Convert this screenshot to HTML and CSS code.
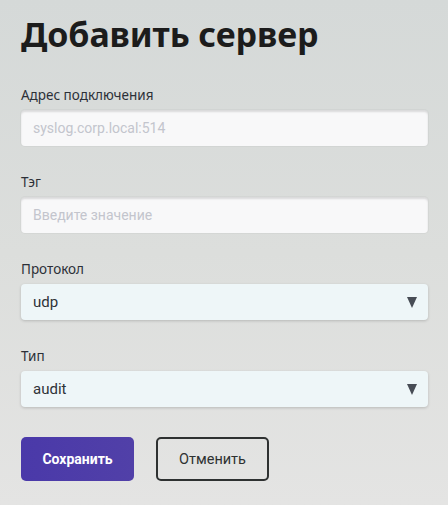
FILE: index.html
```
<!DOCTYPE html>
<html lang="ru">
<head>
<meta charset="utf-8">
<link rel="stylesheet" href="styles.css">
</head>
<body>
<main class="page">
  <h1 class="title">Добавить сервер</h1>
  <form class="form">
    <div class="field">
      <label class="label">Адрес подключения</label>
      <input class="input" type="text" placeholder="syslog.corp.local:514">
    </div>
    <div class="field">
      <label class="label">Тэг</label>
      <input class="input" type="text" placeholder="Введите значение">
    </div>
    <div class="field">
      <label class="label">Протокол</label>
      <div class="select"><span class="select-value">udp</span><span class="caret"></span></div>
    </div>
    <div class="field">
      <label class="label">Тип</label>
      <div class="select"><span class="select-value">audit</span><span class="caret"></span></div>
    </div>
    <div class="actions">
      <button type="button" class="btn btn-primary">Сохранить</button>
      <button type="button" class="btn btn-secondary">Отменить</button>
    </div>
  </form>
</main>
</body>
</html>
```
FILE: styles.css
```
html, body {
  margin: 0;
  padding: 0;
  height: 100%;
}
body {
  background: linear-gradient(180deg, #d5d9d8 0%, #dcdedc 50%, #e4e4e3 100%);
  font-family: "Noto Sans", "Liberation Sans", sans-serif;
  color: #2a2e33;
}
.page {
  padding: 13px 20px 0 21px;
}
.title {
  margin: 0 0 31px 0;
  font-family: "Noto Sans", sans-serif;
  font-weight: 700;
  font-size: 34px;
  line-height: 42px;
  color: #1c1c1c;
  letter-spacing: -0.1px;
}
.form {
  display: flex;
  flex-direction: column;
  gap: 27px;
}
.field {
  display: flex;
  flex-direction: column;
  gap: 6px;
}
.label {
  font-family: "Noto Sans", sans-serif;
  font-size: 13.5px;
  line-height: 18px;
  color: #2c3038;
}
.input {
  box-sizing: border-box;
  height: 36px;
  width: 100%;
  margin: 0;
  border: none;
  border-radius: 4px;
  background: #f8f8f9;
  box-shadow: inset 0 2px 2px rgba(0,0,0,0.12), 0 0 0 1px rgba(0,0,0,0.03);
  padding: 0 12px;
  font-family: "Roboto", sans-serif;
  font-size: 14px;
  color: #333;
  outline: none;
}
.input::placeholder {
  color: #c3c5cd;
}
.select {
  box-sizing: border-box;
  height: 36px;
  border-radius: 4px;
  background: #eef6f8;
  box-shadow: 0 1px 3px rgba(0,0,0,0.18);
  display: flex;
  align-items: center;
  justify-content: space-between;
  padding: 0 11px 0 12px;
}
.select-value {
  font-family: "Roboto", sans-serif;
  font-size: 15px;
  color: #2f3338;
}
.caret {
  width: 0;
  height: 0;
  border-left: 5.5px solid transparent;
  border-right: 5.5px solid transparent;
  border-top: 11px solid #474c55;
}
.actions {
  display: flex;
  gap: 22px;
  margin-top: 3px;
}
.btn {
  box-sizing: border-box;
  width: 113px;
  height: 44px;
  border-radius: 5px;
  font-family: "Roboto", sans-serif;
  font-size: 14px;
  cursor: pointer;
  margin: 0;
}
.btn-primary {
  border: none;
  background: linear-gradient(90deg, #4a39a9 0%, #5140a8 100%);
  color: #fff;
  font-weight: 700;
}
.btn-secondary {
  border: 2px solid #2e3131;
  background: transparent;
  color: #2e3131;
  font-weight: 400;
  font-size: 14.5px;
}
```
